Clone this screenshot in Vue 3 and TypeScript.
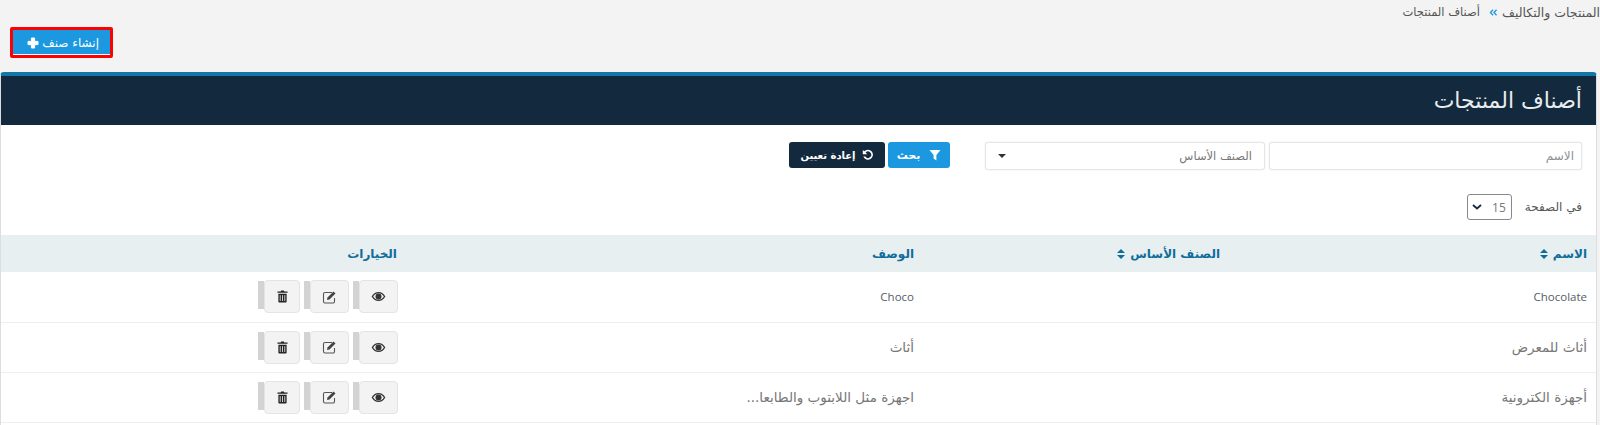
<script setup lang="ts">
interface Row { name: string; parent: string; description: string; latin?: boolean }

const rows: Row[] = [
  { name: 'Chocolate', parent: '', description: 'Choco', latin: true },
  { name: 'أثاث للمعرض', parent: '', description: 'أثاث' },
  { name: 'أجهزة الكترونية', parent: '', description: 'اجهزة مثل اللابتوب والطابعا...' },
]
</script>

<template>
  <div class="page" dir="rtl">
    <div class="crumbs">
      <span class="crumb-parent">المنتجات والتكاليف</span>
      <svg class="crumb-arrow" viewBox="0 0 10 8" width="9" height="7">
        <path d="M4.5 0.8 1.5 4l3 3.2M8.5 0.8 5.5 4l3 3.2" fill="none" stroke="#1b98e0" stroke-width="1.5" />
      </svg>
      <span class="crumb-current">أصناف المنتجات</span>
    </div>

    <div class="create-row">
      <button class="create-btn">
        <span>إنشاء صنف</span>
        <svg viewBox="0 0 12 12" width="12" height="12">
          <path d="M4.4 1h3.2v3.400H11v3.200H7.600V11H4.400V7.600H1V4.400h3.400z" fill="#fff" stroke="#fff" stroke-linejoin="round" />
        </svg>
      </button>
    </div>

    <section class="panel">
      <h1 class="panel-head">أصناف المنتجات</h1>

      <div class="filters">
        <div class="field name-field">الاسم</div>
        <div class="field parent-field">
          <span>الصنف الأساس</span>
          <i class="caret"></i>
        </div>
        <button class="btn btn-blue">
          <svg viewBox="0 0 12 12" width="12" height="12"><path d="M0.5 1h11L7.4 6v5.500L4.600 9.500V6z" fill="#fff" /></svg>
          <span>بحث</span>
        </button>
        <button class="btn btn-dark">
          <svg viewBox="0 0 12 12" width="12" height="12">
            <path d="M2.200 2.300A5 5 0 1 1 1.300 7.600h2A3.200 3.200 0 1 0 3.600 3.600L5.200 5.200H.8V.9z" fill="#fff" />
          </svg>
          <span>إعادة تعيين</span>
        </button>
      </div>

      <div class="per-page">
        <span>في الصفحة</span>
        <div class="per-select">
          <span>15</span>
          <svg viewBox="0 0 10 6" width="10" height="6"><path d="M1 1l4 3.500L9 1" fill="none" stroke="#17293d" stroke-width="1.800" /></svg>
        </div>
      </div>

      <table class="grid">
        <colgroup>
          <col class="c-name" /><col class="c-parent" /><col class="c-desc" /><col />
        </colgroup>
        <thead>
          <tr>
            <th>
              الاسم
              <svg class="sort" viewBox="0 0 8 10" width="8" height="10"><path d="M4 0l4 4H0zM4 10l4-4H0z" fill="#0f6d9b" /></svg>
            </th>
            <th>
              الصنف الأساس
              <svg class="sort" viewBox="0 0 8 10" width="8" height="10"><path d="M4 0l4 4H0zM4 10l4-4H0z" fill="#0f6d9b" /></svg>
            </th>
            <th>الوصف</th>
            <th>الخيارات</th>
          </tr>
        </thead>
        <tbody>
          <tr v-for="row in rows" :key="row.name" :class="{ latin: row.latin }">
            <td>{{ row.name }}</td>
            <td>{{ row.parent }}</td>
            <td>{{ row.description }}</td>
            <td class="opts">
              <div class="actions">
                <div class="action">
                  <button class="icon-btn eye-btn">
                    <svg viewBox="0 0 16 12" width="15" height="11">
                      <path d="M.5 6C2.500 2.600 5 1 8 1s5.500 1.600 7.500 5c-2 3.400-4.500 5-7.500 5S2.500 9.400.5 6z" fill="#333" />
                      <path d="M2.200 6C3.800 3.700 5.700 2.500 8 2.500s4.200 1.200 5.800 3.500c-1.600 2.300-3.500 3.500-5.800 3.500S3.800 8.300 2.200 6z" fill="#f3f3f3" />
                      <circle cx="8" cy="6" r="3.300" fill="#333" />
                    </svg>
                  </button>
                  <i class="tab"></i>
                </div>
                <div class="action">
                  <button class="icon-btn edit-btn">
                    <svg viewBox="0 0 15 14" width="15" height="14">
                      <path d="M10 2.500H3A1.500 1.500 0 0 0 1.500 4v7.500A1.500 1.500 0 0 0 3 13h8a1.500 1.500 0 0 0 1.500-1.500V8" fill="none" stroke="#555" stroke-width="1.100" />
                      <path d="M5.500 7.500 11.500 1.500l2 2-6 6-2.500.5z" fill="#444" />
                    </svg>
                  </button>
                  <i class="tab"></i>
                </div>
                <div class="action">
                  <button class="icon-btn trash-btn">
                    <svg viewBox="0 0 12 14" width="11" height="13">
                      <path d="M4 1.500 4.600.5h2.800L8 1.500h3.500v1.500H.5V1.500z" fill="#222" />
                      <path d="M1.500 4h9v8.500a1 1 0 0 1-1 1h-7a1 1 0 0 1-1-1z" fill="#222" />
                      <path d="M3.500 5.500v6.500M6 5.500v6.500M8.500 5.500v6.500" stroke="#f3f3f3" stroke-width=".9" />
                    </svg>
                  </button>
                  <i class="tab"></i>
                </div>
              </div>
            </td>
          </tr>
        </tbody>
      </table>
    </section>
  </div>
</template>

<style>
html, body { margin: 0; background: #f3f3f3; overflow: hidden; }
</style>

<style scoped>
.page {
  height: 425px;
  padding: 0 3px 0 0;
  box-sizing: border-box;
  overflow: hidden;
  background: #f3f3f3;
  font-family: "DejaVu Sans", "Noto Sans", sans-serif;
  color: #4a4f57;
  font-size: 11px;
}
.crumbs { display: flex; align-items: center; gap: 5px; height: 27px; margin-right: -3px; padding: 0 0 3px 0; box-sizing: border-box; color: #555; }
.crumb-parent { font-size: 12.500px; letter-spacing: 0; }
.crumb-current { font-size: 11.500px; letter-spacing: -.3px; }
.crumb-arrow { margin: 0 -1px 0 4px; }
.create-row { height: 45px; }
.create-btn {
  display: flex;
  align-items: center;
  justify-content: flex-start;
  gap: 3px;
  width: 103px;
  height: 31px;
  margin-right: auto;
  margin-left: 10px;
  padding: 0 11px 0 0;
  box-sizing: border-box;
  border: 3px solid #f00;
  border-radius: 2px;
  background: #1b98e0;
  box-shadow: inset 0 -1px 0 #fff;
  color: #fff;
  font: 12px "DejaVu Sans", sans-serif;
  letter-spacing: -.4px;
}
.panel {
  height: 353px;
  background: #fff;
  border-top: 4px solid #1277a8;
  border-radius: 4px 4px 0 0;
  border-left: 1px solid #ddd;
  border-right: 1px solid #ddd;
  box-sizing: border-box;
}
.panel-head {
  height: 49px;
  margin: 0;
  padding: 0 14px 0 0;
  display: flex;
  align-items: center;
  background: #13293d;
  color: #e8ecef;
  font-size: 22px;
  font-weight: 400;
  letter-spacing: -.9px;
}
.filters { display: flex; align-items: flex-start; height: 69px; padding: 17px 14px 0 0; box-sizing: border-box; }
.field {
  display: flex;
  align-items: center;
  height: 28px;
  padding: 0 7px;
  box-sizing: border-box;
  background: #fff;
  border: 1px solid #e6e6e6;
  border-radius: 3px;
  box-shadow: 0 0 2px #e6e6e6;
  color: #8b8f94;
  font-size: 12px;
}
.name-field { width: 313px; }
.parent-field { width: 280px; margin-right: 4px; justify-content: space-between; padding: 0 12px; color: #777; font-size: 11.500px; }
.caret { width: 0; height: 0; border: 4px solid transparent; border-top-color: #333; border-bottom: 0; }
.btn {
  display: flex;
  align-items: center;
  justify-content: center;
  gap: 6px;
  height: 26px;
  border: 0;
  border-radius: 3px;
  color: #fff;
  font: bold 10px "DejaVu Sans", sans-serif;
}
.btn-blue { width: 62px; margin-right: 35px; gap: 9px; background: #1b98e0; font-size: 11px; }
.btn-dark { width: 96px; margin-right: 3px; background: #13293d; }
.per-page { display: flex; align-items: center; gap: 13px; height: 26px; padding-right: 14px; font-size: 12px; color: #555; margin-bottom: 15px; }
.per-select {
  display: flex;
  align-items: center;
  justify-content: space-between;
  width: 45px;
  height: 26px;
  padding: 0 5px 0 4px;
  box-sizing: border-box;
  border: 1px solid #888;
  border-radius: 3px;
  font: 12px "Open Sans", sans-serif;
  color: #777;
}
.grid { width: 100%; border-collapse: collapse; table-layout: fixed; }
.c-name { width: 367px; }
.c-parent { width: 306px; }
.c-desc { width: 517px; }
.grid th {
  height: 37px;
  padding: 0 9px;
  background: #e8eff1;
  color: #0f6d9b;
  font-size: 12px;
  text-align: right;
}
.grid td {
  height: 50px;
  padding: 0 9px;
  box-sizing: border-box;
  border-bottom: 1px solid #eee;
  color: #777;
  font-size: 13.500px;
  font-family: "DejaVu Sans", sans-serif;
}
.grid .latin td { color: #555c66; font-size: 11.500px; font-family: "Open Sans", sans-serif; }
.grid td.opts { padding-right: 8px; }
.sort { vertical-align: -1px; margin-right: 1px; }
.actions { display: flex; gap: 4px; }
.action { display: flex; align-items: flex-start; }
.tab { width: 6px; height: 28px; margin-top: 1px; background: #d3d3d3; }
.icon-btn {
  display: flex;
  align-items: center;
  justify-content: center;
  height: 33px;
  padding: 0;
  background: #f3f3f3;
  border: 1px solid #e4e4e4;
  border-radius: 4px;
}
.eye-btn { width: 39px; }
.edit-btn { width: 39px; }
.trash-btn { width: 36px; }
</style>
